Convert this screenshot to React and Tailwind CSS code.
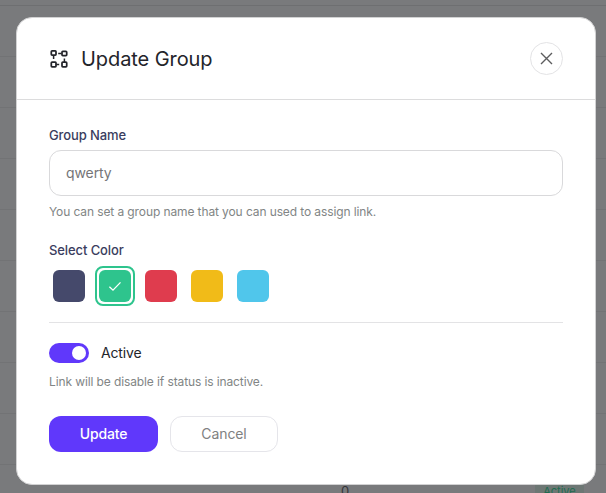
import React from "react";

const swatches = [
  { name: "Navy", color: "bg-[#45496b]" },
  { name: "Green", color: "bg-[#2ec48d]", selected: true },
  { name: "Red", color: "bg-[#df3c4e]" },
  { name: "Yellow", color: "bg-[#f1bb18]" },
  { name: "Sky", color: "bg-[#50c6eb]" },
];

function GroupIcon() {
  return (
    <svg width="18" height="18" viewBox="0 0 18 18" fill="none" stroke="#23242a" strokeWidth="1.75">
      <rect x="1.3" y="0.9" width="4.7" height="4.2" rx="0.8" />
      <rect x="12" y="1.4" width="4.7" height="4.2" rx="0.8" />
      <rect x="1.3" y="12.2" width="4.7" height="4.6" rx="0.8" />
      <rect x="12" y="12.2" width="4.7" height="4.6" rx="0.8" />
      <path d="M3.6 5.3v3.8M8.2 3.5h3.4M6.4 14.5h2.8M14.4 8.4v3.6" strokeWidth="1.5" />
    </svg>
  );
}

function BackgroundTable() {
  return (
    <div className="w-full bg-[#797a7c]">
      <div className="h-[6px] border-b border-[#6e6f71]" />
      {Array.from({ length: 9 }, (_, i) => (
        <div key={i} className="h-[51px] border-b border-[#727375]" />
      ))}
      <div className="flex h-[53px] items-center pl-[341px]">
        <span className="w-[194px] text-[13px] text-[#333438]">0</span>
        <span className="flex h-[22px] w-[49px] items-center justify-center rounded-sm bg-[#6d7774] text-[11px] text-[#1f6b50]">
          Active
        </span>
      </div>
    </div>
  );
}

export default function App() {
  return (
    <div className="relative h-[493px] w-[606px] overflow-hidden font-['Inter',sans-serif]">
      <BackgroundTable />
      <div className="absolute left-4 top-[17px] flex h-[468px] w-[580px] flex-col rounded-2xl border border-[#d2d2d3] bg-white">
        <header className="flex h-[82px] shrink-0 items-center justify-between border-b border-[#dcdcdd] px-8">
          <div className="flex items-center gap-[13px] pl-px pt-px">
            <GroupIcon />
            <h1 className="text-xl leading-7 tracking-[-0.08px] text-[#23242a]">Update Group</h1>
          </div>
          <button aria-label="Close" className="flex size-[33px] items-center justify-center rounded-full border border-[#e3e3e5]">
            <svg width="13" height="13" viewBox="0 0 13 13" fill="none" stroke="#5c5c5e" strokeWidth="1.4">
              <path d="M1 1l11 11M12 1L1 12" />
            </svg>
          </button>
        </header>
        <main className="flex flex-col px-8 pt-[25px]">
          <label className="text-[13px] font-medium leading-5 tracking-[-0.1px] text-[#3a3d5e]">Group Name</label>
          <input
            placeholder="qwerty"
            className="mt-[5px] h-[46px] w-full rounded-xl border border-[#d9d9db] px-4 pb-0.5 text-sm tracking-[-0.1px] placeholder:text-[#757577] outline-none"
          />
          <p className="mt-2 text-xs leading-4 tracking-[-0.105px] text-[#818585]">You can set a group name that you can used to assign link.</p>
          <div className="mt-5 text-[13px] font-medium leading-5 tracking-[-0.1px] text-[#3a3d5e]">Select Color</div>
          <div className="mt-1.5 flex gap-1.5">
            {swatches.map((s) => (
              <button
                key={s.name}
                aria-label={s.name}
                className={`flex size-10 items-center justify-center rounded-lg border-2 ${s.selected ? "border-[#2ec48d]" : "border-transparent"}`}
              >
                <span className={`flex size-8 items-center justify-center rounded-md ${s.color}`}>
                  {s.selected && (
                    <svg width="14" height="12" viewBox="0 0 14 12" fill="none" stroke="white" strokeWidth="1.3">
                      <path d="M1.4 6.8L5 10.2L12.5 2.4" />
                    </svg>
                  )}
                </span>
              </button>
            ))}
          </div>
          <hr className="mt-4 border-[#e3e3e5]" />
          <div className="mt-5 flex h-5 items-center gap-3">
            <button role="switch" aria-checked="true" aria-label="Active" className="flex h-5 w-10 items-center justify-end rounded-full bg-[#6038fb] pr-[3px]">
              <span className="size-3.5 rounded-full bg-white" />
            </button>
            <span className="text-sm tracking-[-0.15px] text-[#23242a]">Active</span>
          </div>
          <p className="mt-[11px] text-xs leading-4 tracking-[-0.11px] text-[#818585]">Link will be disable if status is inactive.</p>
          <div className="mt-[26px] flex gap-3">
            <button className="h-9 w-[109px] rounded-xl bg-[#6038fb] text-sm font-medium tracking-[-0.15px] text-white">Update</button>
            <button className="h-9 w-[108px] rounded-xl border border-[#e5e5ea] text-sm tracking-[-0.1px] text-[#7f8181]">Cancel</button>
          </div>
        </main>
      </div>
    </div>
  );
}
